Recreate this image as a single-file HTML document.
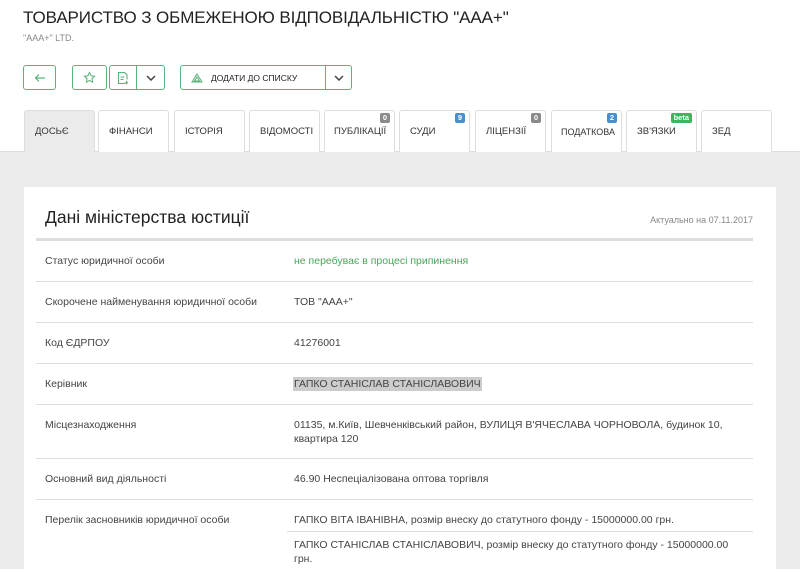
<!DOCTYPE html>
<html><head><meta charset="utf-8"><style>
*{box-sizing:border-box;margin:0;padding:0}
body{width:800px;height:569px;overflow:hidden;background:#fff;font-family:"Liberation Sans",sans-serif;color:#333;position:relative}
.abs{position:absolute}
h1{position:absolute;left:23px;top:8px;font-size:17px;font-weight:normal;color:#222;letter-spacing:-0.1px;white-space:nowrap}
.sub{left:23px;top:33px;font-size:9px;color:#888}
.btn{position:absolute;top:65px;height:25px;border:1px solid #5bb27a;border-radius:3px;background:#fff;display:flex;align-items:center;justify-content:center}
.tab{position:absolute;top:110px;height:42px;width:71px;border:1px solid #ddd;border-bottom:none;border-radius:3px 3px 0 0;background:#fff;font-size:9.5px;color:#333;padding-left:10px;line-height:42px;white-space:nowrap}
.badge{position:absolute;top:2px;right:4px;height:10px;line-height:10px;font-size:7.5px;color:#fff;border-radius:2px;padding:0 3px;font-weight:bold}
.gray{position:absolute;left:0;top:151px;width:800px;height:418px;background:#ebebeb;border-top:1px solid #ddd}
.card{position:absolute;left:24px;top:187px;width:752px;height:400px;background:#fff}
.hl{position:absolute;left:36px;width:717px;height:1px;background:#ddd}
.lbl{position:absolute;left:45px;font-size:10.5px;color:#444}
.val{position:absolute;left:294px;font-size:10.5px;color:#444;line-height:14px}
</style></head><body>
<h1>ТОВАРИСТВО З ОБМЕЖЕНОЮ ВІДПОВІДАЛЬНІСТЮ "ААА+"</h1>
<div class="abs sub">"ААА+" LTD.</div>

<div class="btn" style="left:23px;width:33px"><svg width="12" height="10" viewBox="0 0 12 10"><path d="M11 5H2M5 1.5L1.5 5 5 8.5" stroke="#5bb27a" fill="none" stroke-width="1.2"/></svg></div>
<div class="btn" style="left:72px;width:35px"><svg width="13" height="13" viewBox="0 0 14 14"><path d="M7 1.5l1.7 3.6 3.8.5-2.8 2.6.7 3.8L7 10.2 3.6 12l.7-3.8L1.5 5.6l3.8-.5z" stroke="#5bb27a" fill="none" stroke-width="1.1"/></svg></div>
<div class="btn" style="left:109px;width:56px;justify-content:flex-start">
<div style="width:27px;height:23px;border-right:1px solid #5bb27a;display:flex;align-items:center;justify-content:center"><svg width="12" height="14" viewBox="0 0 12 14"><path d="M8 12.5H1.5v-11h6l2.5 2.5v4.5M3.5 6h4M3.5 8.5h3M9.5 10v3.5M7.8 11.8h3.4" stroke="#5bb27a" fill="none" stroke-width="1.1"/></svg></div>
<div style="width:27px;display:flex;justify-content:center"><svg width="10" height="6" viewBox="0 0 10 6"><path d="M1 1l4 4 4-4" stroke="#444" fill="none" stroke-width="1.5"/></svg></div></div>
<div class="btn" style="left:180px;width:172px;justify-content:flex-start">
<div style="width:146px;height:23px;border-right:1px solid #5bb27a;display:flex;align-items:center;padding-left:10px;font-size:8.5px;color:#222"><svg width="12" height="10" viewBox="0 0 12 10" style="margin-right:8px"><path d="M6 1L11 9H1z M6 4L8.5 8h-5z" stroke="#5bb27a" fill="none" stroke-width="1"/></svg>ДОДАТИ ДО СПИСКУ</div>
<div style="width:25px;display:flex;justify-content:center"><svg width="10" height="6" viewBox="0 0 10 6"><path d="M1 1l4 4 4-4" stroke="#444" fill="none" stroke-width="1.5"/></svg></div></div>

<div class="gray"></div>
<div class="tab" style="left:24px;background:#ebebeb;height:43px">ДОСЬЄ</div>
<div class="tab" style="left:98px">ФІНАНСИ</div>
<div class="tab" style="left:174px">ІСТОРІЯ</div>
<div class="tab" style="left:249px">ВІДОМОСТІ</div>
<div class="tab" style="left:324px;padding-left:9px">ПУБЛІКАЦІЇ<span class="badge" style="background:#8a8a8a">0</span></div>
<div class="tab" style="left:399px">СУДИ<span class="badge" style="background:#4a90d0">9</span></div>
<div class="tab" style="left:475px">ЛІЦЕНЗІЇ<span class="badge" style="background:#8a8a8a">0</span></div>
<div class="tab" style="left:551px;padding-left:9px;font-size:9px">ПОДАТКОВА<span class="badge" style="background:#4a90d0">2</span></div>
<div class="tab" style="left:626px">ЗВ'ЯЗКИ<span class="badge" style="background:#3bb55e">beta</span></div>
<div class="tab" style="left:701px">ЗЕД</div>

<div class="card"></div>
<div class="abs" style="left:45px;top:207px;font-size:17.5px;color:#222">Дані міністерства юстиції</div>
<div class="abs" style="right:47px;top:215px;font-size:9px;color:#888">Актуально на 07.11.2017</div>
<div class="hl" style="top:238px;height:3px;background:#ddd"></div>
<div class="lbl" style="top:255px">Статус юридичної особи</div><div class="val" style="top:254px;color:#4aa55a">не перебуває в процесі припинення</div>
<div class="hl" style="top:281px"></div>
<div class="lbl" style="top:296px">Скорочене найменування юридичної особи</div><div class="val" style="top:295px">ТОВ "ААА+"</div>
<div class="hl" style="top:322px"></div>
<div class="lbl" style="top:337px">Код ЄДРПОУ</div><div class="val" style="top:336px">41276001</div>
<div class="hl" style="top:363px"></div>
<div class="lbl" style="top:378px">Керівник</div><div class="val" style="top:377px;background:#ccc;padding:0 1px;left:293px">ГАПКО СТАНІСЛАВ СТАНІСЛАВОВИЧ</div>
<div class="hl" style="top:404px"></div>
<div class="lbl" style="top:419px">Місцезнаходження</div><div class="val" style="top:418px;width:450px">01135, м.Київ, Шевченківський район, ВУЛИЦЯ В'ЯЧЕСЛАВА ЧОРНОВОЛА, будинок 10, квартира 120</div>
<div class="hl" style="top:458px"></div>
<div class="lbl" style="top:473px">Основний вид діяльності</div><div class="val" style="top:472px">46.90 Неспеціалізована оптова торгівля</div>
<div class="hl" style="top:499px"></div>
<div class="lbl" style="top:514px">Перелік засновників юридичної особи</div><div class="val" style="top:513px">ГАПКО ВІТА ІВАНІВНА, розмір внеску до статутного фонду - 15000000.00 грн.</div>
<div class="abs" style="left:287px;top:531px;width:466px;height:1px;background:#ddd"></div>
<div class="val" style="top:538px;width:450px">ГАПКО СТАНІСЛАВ СТАНІСЛАВОВИЧ, розмір внеску до статутного фонду - 15000000.00 грн.</div>
</body></html>
